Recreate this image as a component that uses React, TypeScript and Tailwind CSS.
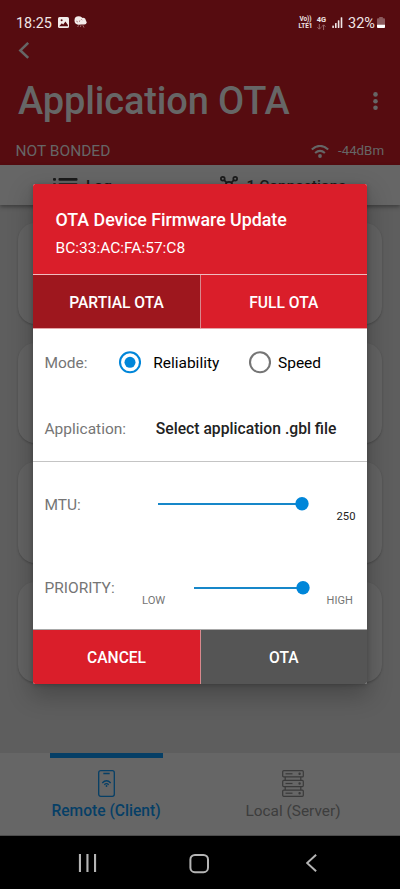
import React from "react";

function StatusBar() {
  return (
    <div className="flex h-[38px] items-start pt-[15px] pl-[16px] pr-[15px] text-[#f0e6e6]">
      <span className="w-[36px] whitespace-nowrap text-[14.4px] leading-[17px]">18:25</span>
      <svg className="ml-[6px] mt-[2px]" width="11" height="11" viewBox="0 0 11 11">
        <rect width="11" height="11" rx="1.6" fill="#f3ecea" />
        <path d="M1.2 9.2 L3.8 6.2 L5.2 7.4 L7.4 4.6 L9.9 8 V9.2 Z" fill="#560c10" />
        <circle cx="3.6" cy="3.2" r="1" fill="#560c10" />
      </svg>
      <svg className="ml-[5px] mt-px" width="13" height="13" viewBox="0 0 13 13">
        <circle cx="4.6" cy="4.4" r="4.1" fill="#f3ecea" />
        <rect x="2" y="4" width="10.6" height="4.6" rx="2.3" fill="#f3ecea" />
        <circle cx="9" cy="4.4" r="2.7" fill="#f3ecea" />
        <path d="M2.4 5.2 l1.4 .8 M5 5.6 l1.2 -1 M7.4 3.4 l.8 .6" stroke="#8a4a4a" strokeWidth=".8" />
        <path d="M4.6 9.4 l-1 1.6 M7 9.2 l-.6 1.8 M8.8 9.2 l1.2 2.4" stroke="#a87c7c" strokeWidth=".9" />
      </svg>
      <div className="flex-1" />
      <div className="mt-px flex w-[15px] flex-col items-center whitespace-nowrap text-[6.4px] font-bold leading-[6.8px]">
        <span>Vo))</span>
        <span>LTE1</span>
      </div>
      <div className="ml-[3px] mt-[2px] flex w-[11px] flex-col items-center text-[7.5px] font-bold leading-[6px]">
        <span>4G</span>
        <svg className="mt-[1px]" width="9" height="6" viewBox="0 0 9 6" fill="none" stroke="#9c6a6c" strokeWidth="1">
          <path d="M2.3 0 V5 M.5 3.3 L2.3 5.2 L4.1 3.3" />
          <path d="M6.6 6 V1 M4.9 2.6 L6.6 .8 L8.4 2.6" />
        </svg>
      </div>
      <svg className="ml-[5px] mt-[2px]" width="11" height="11" viewBox="0 0 11 11" fill="#f0e6e6">
        <rect x="0.3" y="8.6" width="1.6" height="2.4" rx=".5" />
        <rect x="3" y="6" width="1.6" height="5" rx=".5" />
        <rect x="5.8" y="3.2" width="1.6" height="7.8" rx=".5" />
        <rect x="8.7" y="0.2" width="1.6" height="10.8" rx=".5" />
      </svg>
      <span className="ml-[5px] w-[28px] whitespace-nowrap text-[14.5px] leading-[17px]">32%</span>
      <svg className="ml-px mt-[2px]" width="8" height="11" viewBox="0 0 8 11">
        <path d="M2.2 1.2 V0 H5.8 V1.2 H7 Q8 1.2 8 2.2 V10 Q8 11 7 11 H1 Q0 11 0 10 V2.2 Q0 1.2 1 1.2 Z" fill="#8a5a5d" />
        <path d="M0 7.8 H8 V10 Q8 11 7 11 H1 Q0 11 0 10 Z" fill="#fff" />
      </svg>
    </div>
  );
}

function Header() {
  return (
    <header className="h-[165px] bg-[#560c10] text-[#666666]">
      <StatusBar />
      <svg className="ml-[18px] mt-[4px]" width="12" height="17" viewBox="0 0 12 17" fill="none" stroke="#666" strokeWidth="2.6">
        <path d="M10.2 0.9 L2.4 8.4 L10.2 15.9" />
      </svg>
      <div className="mt-[19px] flex h-[46px] items-center pl-[18px] pr-[21px]">
        <h1 className="flex-1 whitespace-nowrap text-[38px] font-medium leading-[46px] tracking-[-0.14px]">Application OTA</h1>
        <svg width="6" height="20" viewBox="0 0 6 20" fill="#666">
          <circle cx="2.5" cy="3.4" r="2.3" />
          <circle cx="2.5" cy="10.2" r="2.3" />
          <circle cx="2.5" cy="16.8" r="2.3" />
        </svg>
      </div>
      <div className="mt-[17px] flex h-[20px] items-center pl-[15.5px] pr-[16px]">
        <span className="flex-1 text-[15.5px] leading-[18px]">NOT BONDED</span>
        <svg width="18" height="13" viewBox="0 0 18 13" fill="none" stroke="#666" strokeWidth="2.1">
          <path d="M0.8 4.5 Q9 -2.7 17.2 4.5" />
          <path d="M4.1 8 Q9 3.7 13.9 8" />
          <circle cx="9" cy="11" r="1.9" fill="#666" stroke="none" />
        </svg>
        <span className="ml-[9px] w-[46px] whitespace-nowrap text-[13.3px] leading-[18px]">-44dBm</span>
      </div>
    </header>
  );
}

function ToolTabs() {
  return (
    <div className="relative flex h-[40px] bg-[#666666] pt-[11px] text-[15.5px] font-medium leading-[18px] text-[#1a1a1a] shadow-[0_2px_4px_rgba(0,0,0,0.35)]">
      <div className="flex w-[200px] pl-[53px]">
        <svg className="mt-[2px]" width="25" height="16" viewBox="0 0 25 16" fill="#1a1a1a">
          <rect x="0" y="0" width="3" height="2.8" rx="1" />
          <rect x="5.5" y="0" width="19" height="2.8" rx="1" />
          <rect x="0" y="5.2" width="3" height="2.8" rx="1" />
          <rect x="5.5" y="5.2" width="19" height="2.8" rx="1" />
          <rect x="0" y="10.8" width="3" height="2.8" rx="1" />
          <rect x="5.5" y="10.8" width="19" height="2.8" rx="1" />
        </svg>
        <span className="ml-[8px] mt-px">Log</span>
      </div>
      <div className="flex flex-1 pl-[20px]">
        <svg width="18" height="18" viewBox="0 0 18 18" fill="none" stroke="#1a1a1a" strokeWidth="1.7">
          <circle cx="2.8" cy="2.8" r="1.9" />
          <circle cx="15.2" cy="2.8" r="1.9" />
          <circle cx="9" cy="9" r="3.2" />
          <circle cx="2.8" cy="15.2" r="1.9" />
          <circle cx="15.2" cy="15.2" r="1.9" />
          <path d="M4.2 4.2 L6.8 6.8 M13.8 4.2 L11.2 6.8 M4.2 13.8 L6.8 11.2 M13.8 13.8 L11.2 11.2" />
        </svg>
        <span className="ml-[8.5px] mt-px whitespace-nowrap">1 Connections</span>
      </div>
    </div>
  );
}

function Background() {
  return (
    <main className="flex h-[548px] flex-col gap-[19px] bg-[#5e5e5e] px-[18px] pt-[18px]">
      {[0, 1, 2, 3].map((i) => (
        <div key={i} className="h-[100.5px] rounded-[17px] bg-[#646464] shadow-[0_1px_2px_rgba(0,0,0,0.22)]" />
      ))}
    </main>
  );
}

function BottomTabs() {
  return (
    <nav className="flex h-[83px] border-b border-[#4c4c4c] bg-[#666666] leading-[20px]">
      <div className="flex w-[212px] flex-col items-center text-[#063f66]">
        <div className="h-[5px] w-[113px] bg-[#063f66]" />
        <svg className="mt-[12px]" width="17" height="27" viewBox="0 0 17 27" fill="none" stroke="#063f66" strokeWidth="1.3">
          <rect x=".7" y=".7" width="15.6" height="25.6" rx="2" />
          <path d="M5.3 3.5 H11.7" strokeWidth="1.5" />
          <path d="M4.3 13 Q8.5 8.5 12.7 13 M6.3 14.8 Q8.5 12.5 10.7 14.8" />
          <circle cx="8.5" cy="16" r=".9" fill="#063f66" stroke="none" />
        </svg>
        <span className="mt-[4px] whitespace-nowrap text-[15.6px] font-medium">Remote (Client)</span>
      </div>
      <div className="flex w-[162px] flex-col items-center pt-[17px] text-[#3d3d3d]">
        <svg width="22" height="27" viewBox="0 0 22 27" fill="none" stroke="#3a3a3a" strokeWidth="1.2">
          {[0.7, 10.4, 20.1].map((y) => (
            <g key={y}>
              <rect x=".7" y={y} width="20.6" height="6.2" rx="1" />
              <path d={`M3.5 ${y + 3.1} H10.5`} />
              <circle cx="17.6" cy={y + 3.1} r=".6" fill="#3a3a3a" />
            </g>
          ))}
          <path d="M3.2 6.9 V10.4 M18.8 6.9 V10.4 M3.2 16.6 V20.1 M18.8 16.6 V20.1" />
        </svg>
        <span className="mt-[4px] whitespace-nowrap text-[15.4px]">Local (Server)</span>
      </div>
    </nav>
  );
}

function SystemNav() {
  return (
    <div className="flex h-[53px] items-start bg-black pt-[18px]">
      <svg className="ml-[78px]" width="19" height="18" viewBox="0 0 19 18" fill="#b5b5b5">
        <rect x=".9" width="2.1" height="18" />
        <rect x="8.4" width="2.1" height="18" />
        <rect x="16" width="2.1" height="18" />
      </svg>
      <svg className="ml-[92px]" width="20" height="20" viewBox="0 0 20 20" fill="none" stroke="#b5b5b5" strokeWidth="2">
        <rect x="1.4" y="1" width="17.6" height="17.2" rx="4.5" />
      </svg>
      <svg className="ml-[97px]" width="12" height="18" viewBox="0 0 12 18" fill="none" stroke="#b5b5b5" strokeWidth="2">
        <path d="M10.1 .8 L1.1 9 L10.1 17.2" />
      </svg>
    </div>
  );
}

function Slider({ className }: { className: string }) {
  return (
    <div className={`flex h-[14px] items-center ${className}`}>
      <div className="h-[2px] flex-1 bg-[#1787c9]" />
      <svg className="-ml-px shrink-0" width="14" height="14" viewBox="0 0 14 14">
        <circle cx="7" cy="6.8" r="6.7" fill="#0086d9" />
      </svg>
    </div>
  );
}

function Radio({ checked }: { checked?: boolean }) {
  const color = checked ? "#0086d9" : "#757575";
  return (
    <svg className="shrink-0" width="23" height="23" viewBox="0 0 23 23" fill="none">
      <circle cx="12" cy="11.3" r="10" stroke={color} strokeWidth="2.1" />
      {checked && <circle cx="12" cy="11.3" r="5.5" fill={color} />}
    </svg>
  );
}

function Dialog() {
  return (
    <section className="absolute left-[33.3px] top-[184px] flex h-[500px] w-[333.5px] flex-col overflow-hidden rounded-[2.5px] bg-white shadow-[0_10px_24px_2px_rgba(0,0,0,0.24),0_1px_5px_rgba(0,0,0,0.2)]">
      <div className="h-[91px] border-b border-[#f0bcbf] bg-[#da1e2a] pl-[22.2px] pt-[26px] text-white">
        <h2 className="whitespace-nowrap text-[17.8px] font-medium leading-[20px]">OTA Device Firmware Update</h2>
        <p className="mt-[8px] whitespace-nowrap text-[15.5px] leading-[20px]">BC:33:AC:FA:57:C8</p>
      </div>
      <div className="flex h-[54px] border-b border-[#e5a5a8] text-[15.6px] font-medium text-white">
        <button className="w-[167.5px] border-r border-[#d8888d] bg-[#9e171e] pt-[4px]">PARTIAL OTA</button>
        <button className="flex-1 bg-[#da1e2a] pt-[4px]">FULL OTA</button>
      </div>
      <div className="flex h-[133px] flex-col border-b border-[#c4c4c4] pl-[11.2px] text-[15.5px] leading-[18px] text-black">
        <div className="mt-[21px] flex h-[25px] items-center">
          <span className="w-[74px] pt-px text-[#757575]">Mode:</span>
          <Radio checked />
          <span className="ml-[11.7px] w-[95.3px] pt-px">Reliability</span>
          <Radio />
          <span className="ml-[6.5px] pt-px text-[15.5px]">Speed</span>
        </div>
        <div className="mt-[45px] flex items-center">
          <span className="w-[111.3px] text-[#757575]">Application:</span>
          <span className="whitespace-nowrap text-[15.7px] font-medium text-[#222222]">Select application .gbl file</span>
        </div>
      </div>
      <div className="flex h-[168px] flex-col border-b border-[#a8a8a8] pl-[11.2px] text-[15.5px] leading-[18px] text-[#757575]">
        <div className="mt-[33px] flex h-[83px] items-start">
          <span className="w-[113.3px] pt-px">MTU:</span>
          <Slider className="mt-[2px] w-[151.5px]" />
          <span className="ml-[27.3px] mt-[12.5px] text-[11.2px] text-[#222222]">250</span>
        </div>
        <div className="flex items-start">
          <span className="w-[97.5px] pt-px">PRIORITY:</span>
          <span className="mt-[13.5px] w-[52.3px] text-[11.2px]">LOW</span>
          <Slider className="mt-[3px] w-[116px]" />
          <span className="ml-[16.3px] mt-[13.5px] text-[11px]">HIGH</span>
        </div>
      </div>
      <div className="flex flex-1 text-[15.6px] font-medium text-white">
        <button className="w-[167.5px] border-r border-[#d8888d] bg-[#da1e2a] pt-[3px]">CANCEL</button>
        <button className="flex-1 bg-[#555555] pt-[3px]">OTA</button>
      </div>
    </section>
  );
}

export default function App() {
  return (
    <div className="relative h-[889px] w-[400px] overflow-hidden bg-black font-['Roboto',sans-serif]">
      <Header />
      <ToolTabs />
      <Background />
      <BottomTabs />
      <SystemNav />
      <Dialog />
    </div>
  );
}
